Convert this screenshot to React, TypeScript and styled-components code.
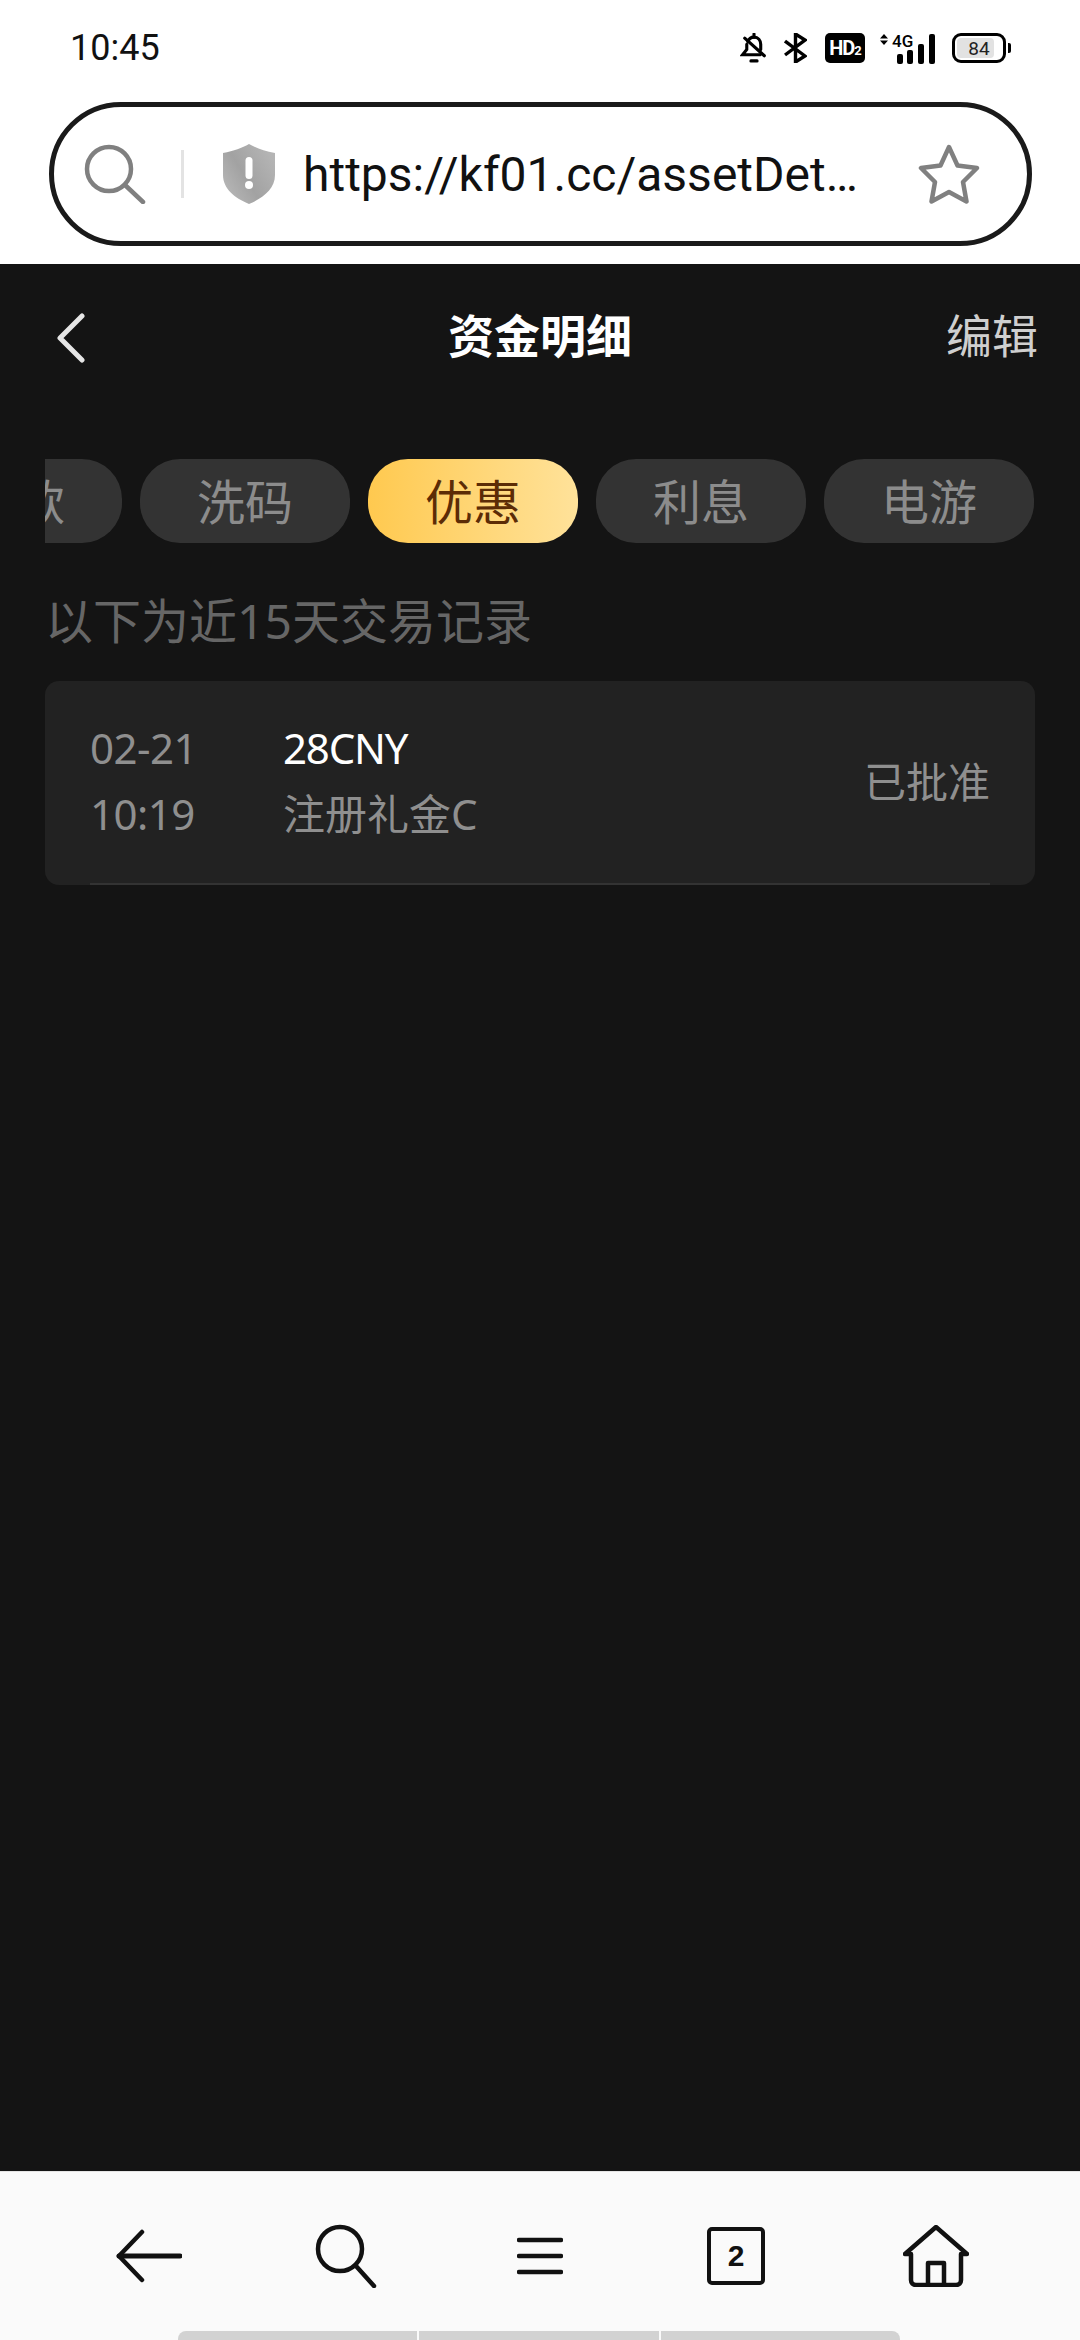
import styled, { createGlobalStyle } from 'styled-components';

const tabs = ['提款', '洗码', '优惠', '利息', '电游'];

function App() {
  return (
    <>
      <GlobalStyle />
      <Screen>
        <StatusBar>
          <Clock>10:45</Clock>
          <StatusIcons>
            <svg width="28" height="31" viewBox="0 0 26 30" fill="none" stroke="#000" strokeWidth="3" strokeLinecap="round">
              <path d="M13 1v3" />
              <path d="M7 8.500c1-3 3.500-4.500 6-4.500 4 0 6.500 3 6.500 7v5" />
              <path d="M6 11v5l-4 5h17" />
              <path d="M23 22 4 5" />
              <path d="M10 27h6" />
            </svg>
            <svg width="23" height="30" viewBox="0 0 23 30" fill="none" stroke="#000" strokeWidth="3.400">
              <path d="M1 8l20 15-9.500 6V1L21 7 1 22" />
            </svg>
            <HdBadge>
              HD<small>2</small>
            </HdBadge>
            <SignalIcon width="57" height="31" viewBox="0 0 57 31">
              <path d="M5 1l4 4.500H1zM5 12 1 7.500h8z" fill="#000" />
              <SignalLabel x="13" y="14">
                4G
              </SignalLabel>
              <rect x="18" y="21" width="6" height="10" rx="2" />
              <rect x="28" y="17" width="6" height="14" rx="2" />
              <rect x="39" y="11" width="6" height="20" rx="2" />
              <rect x="50" y="1" width="6" height="30" rx="2" />
            </SignalIcon>
            <Battery>
              <BatteryFill />
              <BatteryLevel>84</BatteryLevel>
            </Battery>
          </StatusIcons>
        </StatusBar>

        <AddressArea>
          <AddressBar>
            <svg width="62" height="60" viewBox="0 0 62 60" fill="none" stroke="#808080" strokeWidth="4.500" strokeLinecap="round">
              <circle cx="25" cy="25" r="22" />
              <path d="M41 41l18 17" />
            </svg>
            <Divider />
            <svg width="56" height="62" viewBox="0 0 56 62">
              <defs>
                <linearGradient id="shieldShade" x1="0" y1="1" x2="1" y2="0.300">
                  <stop offset="0" stopColor="#bdbdbd" />
                  <stop offset="0.500" stopColor="#a2a2a2" />
                  <stop offset="1" stopColor="#b4b4b4" />
                </linearGradient>
              </defs>
              <path d="M28 1c7 4 15 7 26 9v22c0 14-12 23-26 29C14 55 2 46 2 32V10c11-2 19-5 26-9z" fill="url(#shieldShade)" />
              <rect x="24.500" y="14" width="7" height="22" rx="3.500" fill="#fff" />
              <circle cx="28" cy="42" r="4" fill="#fff" />
            </svg>
            <UrlText>https://kf01.cc/assetDet…</UrlText>
            <svg width="62" height="60" viewBox="0 0 62 60" fill="none" stroke="#808080" strokeWidth="4.500" strokeLinejoin="round">
              <path d="M31 3l8.500 18.500L59 24 45 38l3.500 19.500L31 48 13.500 57.500 17 38 3 24l19.500-2.500z" />
            </svg>
          </AddressBar>
        </AddressArea>

        <Page>
          <NavBar>
            <svg width="30" height="50" viewBox="0 0 30 50" fill="none" stroke="#e6e6e6" strokeWidth="5" strokeLinecap="round" strokeLinejoin="round">
              <path d="M26 3 4 25l22 22" />
            </svg>
            <NavTitle>资金明细</NavTitle>
            <NavAction>编辑</NavAction>
          </NavBar>

          <TabStrip>
            <TabTrack>
              {tabs.map((tab) => (
                <TabPill key={tab} $active={tab === '优惠'}>
                  {tab}
                </TabPill>
              ))}
            </TabTrack>
          </TabStrip>

          <Notice>以下为近15天交易记录</Notice>

          <RecordCard>
            <RecordRow>
              <DateColumn>
                <span>02-21</span>
                <span>10:19</span>
              </DateColumn>
              <InfoColumn>
                <Amount>28CNY</Amount>
                <span>注册礼金C</span>
              </InfoColumn>
              <RecordStatus>已批准</RecordStatus>
            </RecordRow>
          </RecordCard>
        </Page>

        <BottomBar>
          <BottomIcons>
            <svg width="66" height="54" viewBox="0 0 66 54" fill="none" stroke="#111" strokeWidth="4.500" strokeLinecap="round" strokeLinejoin="round">
              <path d="M26 3 3 27l23 24" />
              <path d="M3 27h61" strokeWidth="5" />
            </svg>
            <svg width="62" height="64" viewBox="0 0 62 64" fill="none" stroke="#111" strokeWidth="4.500" strokeLinecap="round">
              <circle cx="25" cy="25" r="22" />
              <path d="M41 42l18 20" />
            </svg>
            <svg width="46" height="38" viewBox="0 0 46 38" fill="none" stroke="#111" strokeWidth="4.500" strokeLinecap="round">
              <path d="M2 3h42M2 19h42M2 35h42" />
            </svg>
            <TabCount>2</TabCount>
            <svg width="66" height="62" viewBox="0 0 66 62" fill="none" stroke="#111" strokeWidth="4.500" strokeLinecap="round" strokeLinejoin="round">
              <path d="M2 29 33 2l31 27h-6v26c0 3-2 5-5 5H13c-3 0-5-2-5-5V29z" />
              <path d="M25 60V38h16v22" />
            </svg>
          </BottomIcons>
          <HomeIndicator>
            <IndicatorPart $edge="left" />
            <IndicatorPart />
            <IndicatorPart $edge="right" />
          </HomeIndicator>
        </BottomBar>
      </Screen>
    </>
  );
}

export default App;

const GlobalStyle = createGlobalStyle`
  html, body {
    margin: 0;
    padding: 0;
    background: #fff;
  }
  * {
    box-sizing: border-box;
  }
  svg {
    display: block;
    flex-shrink: 0;
  }
`;

const Screen = styled.div`
  width: 1080px;
  height: 2340px;
  display: flex;
  flex-direction: column;
  overflow: hidden;
  font-family: 'Roboto', 'Noto Sans CJK SC', sans-serif;
`;

const StatusBar = styled.div`
  height: 96px;
  flex-shrink: 0;
  display: flex;
  align-items: center;
  justify-content: space-between;
  padding: 0 69px 0 70px;
  background: #fff;
`;

const Clock = styled.div`
  font-size: 36px;
  color: #111;
`;

const StatusIcons = styled.div`
  display: flex;
  align-items: center;
  gap: 16px;
`;

const HdBadge = styled.div`
  width: 40px;
  height: 30px;
  margin: 0 -2px 0 2px;
  border-radius: 5px;
  background: #000;
  color: #fff;
  font-size: 20px;
  font-weight: 700;
  letter-spacing: -1px;
  display: flex;
  align-items: center;
  justify-content: center;

  small {
    font-size: 13px;
    margin-top: 5px;
  }
`;

const SignalIcon = styled.svg`
  overflow: visible;
`;

const SignalLabel = styled.text`
  font-size: 17px;
  font-weight: 500;
  fill: #000;
`;

const Battery = styled.div`
  position: relative;
  width: 54px;
  height: 30px;
  margin-right: 5px;
  border: 3px solid #000;
  border-radius: 9px;
  padding: 2px;

  &::after {
    content: '';
    position: absolute;
    right: -8px;
    top: 7px;
    width: 3px;
    height: 10px;
    border-radius: 0 2px 2px 0;
    background: #000;
  }
`;

const BatteryFill = styled.div`
  width: 84%;
  height: 100%;
  background: #e2e2e2;
  border-radius: 4px;
`;

const BatteryLevel = styled.span`
  position: absolute;
  inset: 0;
  display: flex;
  align-items: center;
  justify-content: center;
  font-size: 19px;
  color: #222;
`;

const AddressArea = styled.div`
  height: 168px;
  flex-shrink: 0;
  padding: 6px 48px 0 49px;
  background: #fff;
`;

const AddressBar = styled.div`
  height: 144px;
  display: flex;
  align-items: center;
  padding: 0 47px 0 30px;
  border: 5px solid #1a1a1a;
  border-radius: 72px;
`;

const Divider = styled.div`
  width: 3px;
  height: 48px;
  margin: 0 37px 0 35px;
  background: #e3e3e3;
`;

const UrlText = styled.div`
  flex: 1;
  margin-left: 26px;
  font-size: 48px;
  color: #111;
  white-space: nowrap;
  overflow: hidden;
`;

const Page = styled.div`
  flex: 1;
  background: #141414;
  padding: 0 45px;
  font-family: 'Noto Sans', 'Noto Sans CJK SC', sans-serif;
`;

const NavBar = styled.div`
  position: relative;
  height: 148px;
  display: flex;
  align-items: center;
  justify-content: space-between;
  padding: 0 0 0 11px;
`;

const NavTitle = styled.div`
  position: absolute;
  left: 0;
  right: 0;
  top: 38px;
  line-height: 66px;
  text-align: center;
  font-size: 46px;
  font-weight: 700;
  color: #fff;
`;

const NavAction = styled.div`
  font-size: 46px;
  line-height: 66px;
  margin: -6px -3px 0 0;
  color: #cfcfcf;
`;

const TabStrip = styled.div`
  margin-top: 47px;
  overflow: hidden;
`;

const TabTrack = styled.div`
  display: flex;
  gap: 18px;
  margin-left: -133px;
`;

const TabPill = styled.div<{ $active?: boolean }>`
  width: 210px;
  height: 84px;
  flex-shrink: 0;
  padding-bottom: 5px;
  border-radius: 40px;
  display: flex;
  align-items: center;
  justify-content: center;
  font-size: 48px;
  color: ${(p) => (p.$active ? '#5c2c06' : '#8c8c8c')};
  background: ${(p) => (p.$active ? 'linear-gradient(90deg, #ffc94f, #ffe29a)' : '#333333')};
`;

const Notice = styled.div`
  margin-top: 48px;
  line-height: 60px;
  font-size: 48px;
  color: #666;
`;

const RecordCard = styled.div`
  margin-top: 30px;
  height: 204px;
  padding: 0 45px;
  border-radius: 14px;
  background: #222;
`;

const RecordRow = styled.div`
  height: 100%;
  display: flex;
  align-items: center;
  border-bottom: 2px solid #333;
  font-size: 42px;
  color: #8f8f8f;
`;

const DateColumn = styled.div`
  width: 193px;
  margin-top: -3px;
  display: flex;
  flex-direction: column;
  gap: 10px;
  line-height: 56px;
  letter-spacing: -0.5px;
`;

const InfoColumn = styled.div`
  flex: 1;
  margin-top: -3px;
  display: flex;
  flex-direction: column;
  gap: 10px;
  line-height: 56px;
`;

const Amount = styled.span`
  color: #fff;
  letter-spacing: -1.2px;
`;

const RecordStatus = styled.div`
  margin-bottom: 6px;
`;

const BottomBar = styled.div`
  height: 169px;
  flex-shrink: 0;
  display: flex;
  flex-direction: column;
  background: #fafafa;
  border-top: 1px solid #e4e4e4;
`;

const BottomIcons = styled.div`
  flex: 1;
  display: grid;
  grid-template-columns: 197px 197px 192px 200px 200px;
  align-items: center;
  justify-items: center;
  padding: 8px 0 0 50px;
`;

const TabCount = styled.div`
  width: 58px;
  height: 58px;
  border: 4.500px solid #111;
  border-radius: 5px;
  display: flex;
  align-items: center;
  justify-content: center;
  font-family: 'Liberation Sans', sans-serif;
  font-size: 30px;
  font-weight: 700;
  color: #111;
`;

const HomeIndicator = styled.div`
  width: 722px;
  height: 9px;
  margin-left: 178px;
  display: flex;
  gap: 2px;
`;

const IndicatorPart = styled.div<{ $edge?: 'left' | 'right' }>`
  flex: 1;
  background: #d2d2d2;
  border-radius: ${(p) => (p.$edge === 'left' ? '8px 0 0 0' : p.$edge === 'right' ? '0 8px 0 0' : '0')};
`;
